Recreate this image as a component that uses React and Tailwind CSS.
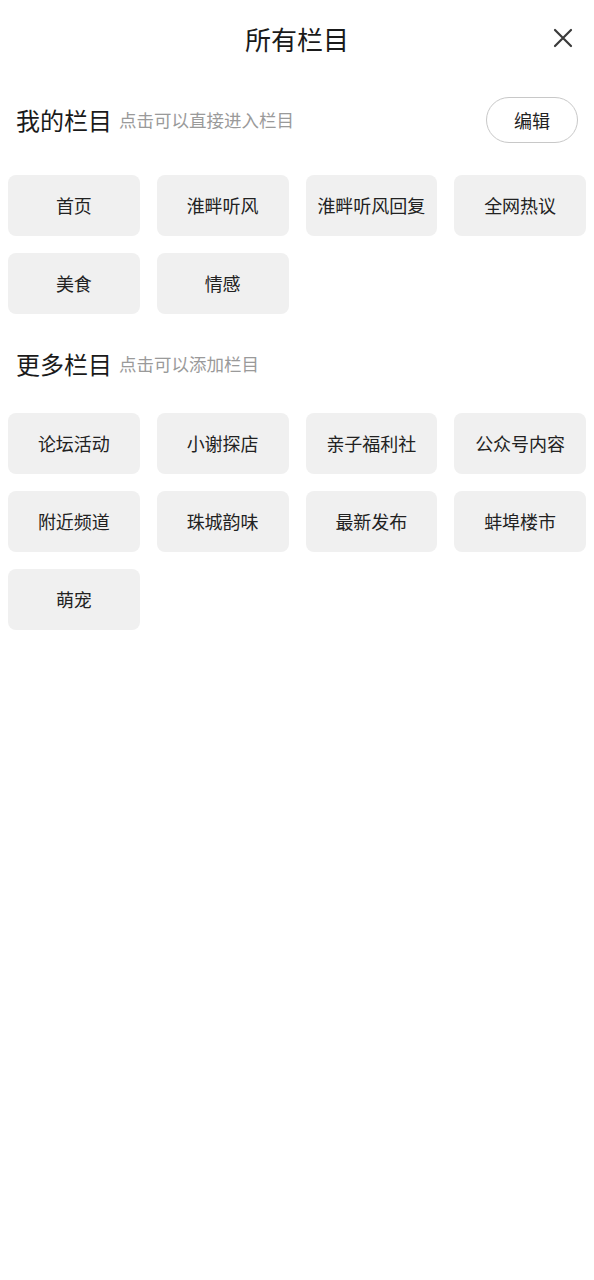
import React from 'react';

const myChannels = ['首页', '淮畔听风', '淮畔听风回复', '全网热议', '美食', '情感'];
const moreChannels = ['论坛活动', '小谢探店', '亲子福利社', '公众号内容', '附近频道', '珠城韵味', '最新发布', '蚌埠楼市', '萌宠'];

function Tile({ label }) {
  return (
    <div className="h-[61px] rounded-lg bg-[#f0f0f0] flex items-center justify-center text-[18px] text-[#222]">
      {label}
    </div>
  );
}

function TileGrid({ items }) {
  return (
    <div className="grid grid-cols-4 gap-x-[17px] gap-y-[17px] px-2">
      {items.map((item) => (
        <Tile key={item} label={item} />
      ))}
    </div>
  );
}

function SectionHeading({ title, hint, children }) {
  return (
    <div className="h-[46px] flex items-center justify-between pl-4 pr-4">
      <div className="flex items-center">
        <span className="text-[24px] text-[#1a1a1a] leading-none">{title}</span>
        <span className="ml-[7px] text-[17.5px] text-[#9a9a9a] leading-none">{hint}</span>
      </div>
      {children}
    </div>
  );
}

export default function App() {
  return (
    <div
      className="w-[594px] h-[1280px] bg-white"
      style={{ fontFamily: '"Noto Sans CJK SC", "Noto Sans", sans-serif' }}
    >
      {/* Header */}
      <div className="h-[80px] pb-[4px] grid grid-cols-[1fr_auto_1fr] items-center">
        <div />
        <h1 className="text-[26px] text-[#1a1a1a] font-normal">所有栏目</h1>
        <div className="flex justify-end pr-[21px]">
          <svg width="20" height="20" viewBox="0 0 20 20" fill="none" stroke="#3a3a3a" strokeWidth="2.2" strokeLinecap="round">
            <path d="M2 2 L18 18 M18 2 L2 18" />
          </svg>
        </div>
      </div>

      {/* My channels */}
      <div className="mt-[17px]">
        <SectionHeading title="我的栏目" hint="点击可以直接进入栏目">
          <button className="w-[92px] h-[46px] rounded-full border border-[#c8c8c8] text-[18px] text-[#222] flex items-center justify-center">
            编辑
          </button>
        </SectionHeading>
      </div>
      <div className="mt-[32px]">
        <TileGrid items={myChannels} />
      </div>

      {/* More channels */}
      <div className="mt-[27px]">
        <SectionHeading title="更多栏目" hint="点击可以添加栏目" />
      </div>
      <div className="mt-[26px]">
        <TileGrid items={moreChannels} />
      </div>
    </div>
  );
}
